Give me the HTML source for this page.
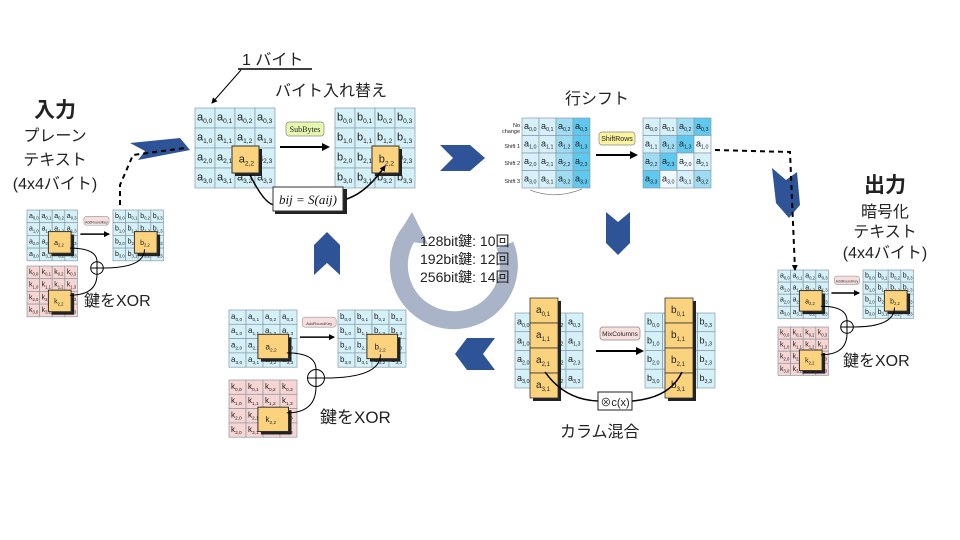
<!DOCTYPE html>
<html><head><meta charset="utf-8">
<style>
html,body{margin:0;padding:0;background:#fff;}
svg{display:block;font-family:"Liberation Sans","Noto Sans CJK JP",sans-serif;}
.t{font-family:"Liberation Sans","Noto Sans CJK JP",sans-serif;fill:#222;}
</style></head><body>
<svg id="s" width="960" height="540" viewBox="0 0 960 540" xmlns="http://www.w3.org/2000/svg">
<defs>
<marker id="ah" markerWidth="8" markerHeight="8" refX="6" refY="4" orient="auto" markerUnits="userSpaceOnUse"><path d="M0,0 L8,4 L0,8 z" fill="#000"/></marker>
<marker id="ahs" markerWidth="6" markerHeight="6" refX="5" refY="3" orient="auto" markerUnits="userSpaceOnUse"><path d="M0,0 L6,3 L0,6 z" fill="#000"/></marker>
</defs>
<!-- cycle ring -->
<path d="M 505 245 A 55 55 0 1 1 410 232" fill="none" stroke="#a9b4c8" stroke-width="18"/>
<path d="M 395 240 L 412 212 L 428 244 z" fill="#a9b4c8"/>
<g id="g"></g>
<!-- texts -->
<text class="t" x="55" y="117" font-size="21" font-weight="bold" text-anchor="middle">入力</text>
<text class="t" x="55" y="141" font-size="16" text-anchor="middle">プレーン</text>
<text class="t" x="55" y="165" font-size="16" text-anchor="middle">テキスト</text>
<text class="t" x="55" y="189" font-size="16" text-anchor="middle">(4x4バイト)</text>
<text class="t" x="885" y="192" font-size="21" font-weight="bold" text-anchor="middle">出力</text>
<text class="t" x="885" y="217" font-size="16" text-anchor="middle">暗号化</text>
<text class="t" x="885" y="237" font-size="16" text-anchor="middle">テキスト</text>
<text class="t" x="885" y="258" font-size="16" text-anchor="middle">(4x4バイト)</text>
<text class="t" x="242" y="65" font-size="16">1 バイト</text>
<line x1="238" y1="69" x2="312" y2="69" stroke="#000" stroke-width="1.5"/>
<line x1="241" y1="70" x2="212" y2="103" stroke="#000" stroke-width="1" marker-end="url(#ahs)"/>
<text class="t" x="275" y="96" font-size="16">バイト入れ替え</text>
<text class="t" x="565" y="104" font-size="16">行シフト</text>
<text class="t" x="560" y="437" font-size="16">カラム混合</text>
<text class="t" x="420" y="246" font-size="14">128bit鍵: 10回</text>
<text class="t" x="420" y="264" font-size="14">192bit鍵: 12回</text>
<text class="t" x="420" y="282" font-size="14">256bit鍵: 14回</text>
<text class="t" x="84" y="306" font-size="16">鍵をXOR</text>
<text class="t" x="320" y="423" font-size="17">鍵をXOR</text>
<text class="t" x="843" y="366" font-size="16">鍵をXOR</text>
<!-- dashed path -->
<path d="M120 205 L120 185 L133 155 L185 148" fill="none" stroke="#000" stroke-width="2" stroke-dasharray="5,4"/>
<path d="M715 150 L790 152 L795 270" fill="none" stroke="#000" stroke-width="2" stroke-dasharray="5,4" marker-end="url(#ahs)"/>
</svg>
<script>
var NS="http://www.w3.org/2000/svg",G=document.getElementById('g');
function el(n,a,txt){var e=document.createElementNS(NS,n);for(var k in a)e.setAttribute(k,a[k]);if(txt!=null)e.textContent=txt;G.appendChild(e);return e;}
function cell(x,y,w,h,fill,L,i,j,fs){
 el('rect',{x:x,y:y,width:w,height:h,fill:fill,stroke:'#8a9aa5','stroke-width':0.7});
 var t=el('text',{x:x+2,y:y+h*0.62,'font-size':fs,fill:'#222'});
 t.textContent=L;var s=document.createElementNS(NS,'tspan');s.setAttribute('font-size',fs*0.6);s.setAttribute('dy',fs*0.25);s.textContent=i+','+j;t.appendChild(s);
}
function grid(x,y,w,h,L,fill,fs,map,fills){
 var cw=w/4,ch=h/4;
 for(var i=0;i<4;i++)for(var j=0;j<4;j++){
  var jj=map?map[i][j]:j;var f=fills?fills[i][j]:fill;
  cell(x+j*cw,y+i*ch,cw,ch,f,L,i,jj,fs);}
}
function hi(x,y,w,h,L,lab,fs){
 el('rect',{x:x+3,y:y+3,width:w,height:h,fill:'#222'});
 el('rect',{x:x,y:y,width:w,height:h,fill:'#fbd37f',stroke:'#333','stroke-width':1});
 var t=el('text',{x:x+w*0.25,y:y+h*0.62,'font-size':fs,fill:'#222'});t.textContent=L;
 var s=document.createElementNS(NS,'tspan');s.setAttribute('font-size',fs*0.6);s.setAttribute('dy',fs*0.25);s.textContent=lab;t.appendChild(s);
}
var BL='#d4f0f8',PK='#f7d5d2';
// small AddRoundKey panels
function ark(sx,sy,ox,ky,cw,ch,cx,cy,fs){
 grid(sx,sy,cw*4,ch*4,'a',BL,fs);
 grid(sx,ky,cw*4,ch*4,'k',PK,fs);
 grid(ox,sy,cw*4,ch*4,'b',BL,fs);
 hi(sx+cw*1.7,sy+ch*1.7,cw*1.8,ch*1.7,'a','2,2',fs);
 hi(sx+cw*1.7,ky+ch*1.9,cw*1.8,ch*1.7,'k','2,2',fs);
 hi(ox+cw*1.7,sy+ch*1.7,cw*1.8,ch*1.7,'b','2,2',fs);
 var mx=(sx+cw*4+ox)/2;
 el('rect',{x:mx-cw*0.9,y:sy+ch*0.5,width:cw*2,height:ch*0.7,rx:3,fill:'#f7dede',stroke:'#999','stroke-width':0.6});
 el('text',{x:mx+cw*0.1,y:sy+ch*1.05,'font-size':fs*0.5,'text-anchor':'middle',fill:'#333'},'AddRoundKey');
 el('line',{x1:sx+cw*4+3,y1:sy+ch*1.9,x2:ox-4,y2:sy+ch*1.9,stroke:'#000','stroke-width':1.5,'marker-end':'url(#ahs)'});
 el('path',{d:'M'+(sx+cw*3.4)+' '+(sy+ch*3)+' Q'+cx+' '+(sy+ch*3)+' '+cx+' '+(cy-cw*0.5)+' M'+(sx+cw*3.4)+' '+(ky+ch*2.3)+' Q'+cx+' '+(ky+ch*2.3)+' '+cx+' '+(cy+cw*0.5)+' M'+(cx+cw*0.5)+' '+cy+' Q'+(ox+cw*2.5)+' '+cy+' '+(ox+cw*2.5)+' '+(sy+ch*3.1),fill:'none',stroke:'#000','stroke-width':1});
 el('circle',{cx:cx,cy:cy,r:cw*0.5,fill:'#fff',stroke:'#000','stroke-width':1});
 el('path',{d:'M'+(cx-cw*0.5)+' '+cy+'H'+(cx+cw*0.5)+'M'+cx+' '+(cy-cw*0.5)+'V'+(cy+cw*0.5),stroke:'#000','stroke-width':1});
}
ark(27,210,113,266,12.6,12.7,97,268,7);
ark(778,270,863,327,12.6,12.1,847,327,7);
ark(229,310,338,380,17,14.3,316,378,8);
// SubBytes
grid(195,108,80,80,'a',BL,11);
grid(335,108,80,80,'b',BL,11);
hi(232,146,27,27,'a','2,2',11);
hi(372,146,27,27,'b','2,2',11);
el('rect',{x:286,y:122,width:38,height:14,rx:3,fill:'#e6f7b0',stroke:'#888','stroke-width':0.7});
el('text',{x:305,y:132,'font-size':8,'text-anchor':'middle','font-family':'Liberation Serif',fill:'#222'},'SubBytes');
el('line',{x1:280,y1:147,x2:328,y2:147,stroke:'#000','stroke-width':2,'marker-end':'url(#ah)'});
el('path',{d:'M250 175 Q265 205 275 205 M343 200 Q365 195 385 166',fill:'none',stroke:'#000','stroke-width':1.5,'marker-end':'url(#ahs)'});
el('rect',{x:275,y:189,width:72,height:25,fill:'#222'});
el('rect',{x:273,y:187,width:70,height:24,fill:'#fff',stroke:'#333','stroke-width':1});
el('text',{x:308,y:204,'font-size':13,'text-anchor':'middle','font-style':'italic','font-family':'Liberation Serif',fill:'#111'},'bij = S(aij)');
// ShiftRows
var DB='#5ec8ef',MB='#9fdcf3',LB='#d6f1fb',VB='#eefaff';
var sf=[[LB,LB,MB,DB],[LB,LB,MB,DB],[LB,LB,MB,DB],[LB,LB,MB,DB]];
grid(522,118,68,70,'a',LB,9,null,sf);
var mp=[[0,1,2,3],[1,2,3,0],[2,3,0,1],[3,0,1,2]];
var sf2=[[LB,LB,MB,DB],[LB,MB,DB,VB],[MB,DB,VB,LB],[DB,VB,LB,MB]];
grid(643,118,68,70,'a',LB,9,mp,sf2);
el('rect',{x:599,y:132,width:36,height:13,rx:3,fill:'#fbf3a0',stroke:'#888','stroke-width':0.7});
el('text',{x:617,y:141,'font-size':7,'text-anchor':'middle',fill:'#222'},'ShiftRows');
el('line',{x1:596,y1:155,x2:636,y2:155,stroke:'#000','stroke-width':2,'marker-end':'url(#ah)'});
[['No',127],['change',133],['Shift 1',148],['Shift 2',165],['Shift 3',183]].forEach(function(a){el('text',{x:520,y:a[1],'font-size':5.5,'text-anchor':'end',fill:'#222'},a[0]);});
el('path',{d:'M530 190 Q555 200 582 189',fill:'none',stroke:'#888','stroke-width':0.7});
// MixColumns
grid(515,313,68,75,'a',BL,9);
grid(645,313,70,75,'b',BL,9);
function col(x,L){for(var i=0;i<4;i++){el('rect',{x:x+3,y:298+i*25+3,width:28,height:25,fill:'#222'});el('rect',{x:x,y:298+i*25,width:28,height:25,fill:'#fbd37f',stroke:'#333','stroke-width':0.8});var t=el('text',{x:x+6,y:298+i*25+15,'font-size':10,fill:'#222'});t.textContent=L;var s=document.createElementNS(NS,'tspan');s.setAttribute('font-size',6);s.setAttribute('dy',3);s.textContent=i+',1';t.appendChild(s);}}
col(530,'a');col(665,'b');
el('rect',{x:600,y:327,width:40,height:13,rx:3,fill:'#f9dede',stroke:'#888','stroke-width':0.7});
el('text',{x:620,y:336,'font-size':6.5,'text-anchor':'middle',fill:'#222'},'MixColumns');
el('line',{x1:596,y1:351,x2:642,y2:351,stroke:'#000','stroke-width':2,'marker-end':'url(#ah)'});
el('path',{d:'M545 372 Q565 400 598 401 M632 401 Q670 398 682 372',fill:'none',stroke:'#000','stroke-width':1.5});
el('rect',{x:598,y:392,width:34,height:18,fill:'#fff',stroke:'#222','stroke-width':1});
el('text',{x:615,y:406,'font-size':11,'text-anchor':'middle',fill:'#222'},'⊗c(x)');
// blue chevrons
var C='#2e5497';
function chev(pts){el('polygon',{points:pts,fill:C});}
chev('130,143 180,138 190,150 138,160 145,151');
chev('440,145 470,145 485,158 470,171 440,171 453,158');
chev('606,212 618,222 630,212 630,243 618,255 606,243');
chev('495,338 467,338 455,354 467,370 495,370 483,354');
chev('314,275 314,245 327,232 340,245 340,275 327,263');
chev('772,168 786,180 797,172 800,205 789,218 776,203');
</script>
</body></html>
